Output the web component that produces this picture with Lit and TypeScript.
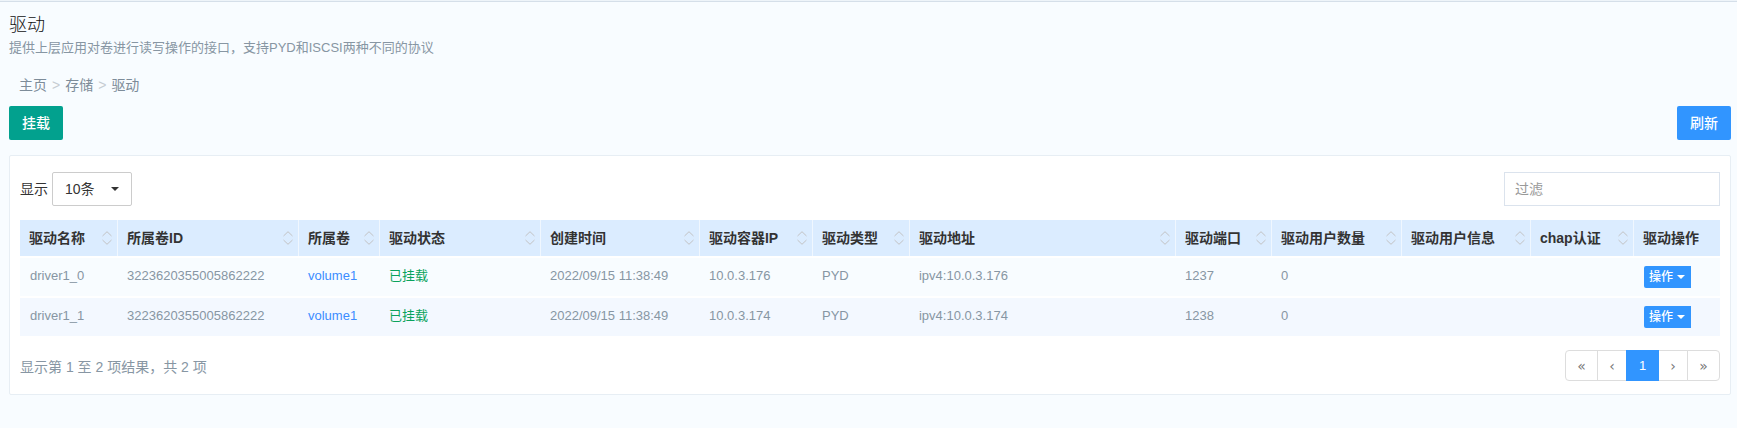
import { LitElement, html, css } from "lit";
import { customElement, state } from "lit/decorators.js";

interface Column {
  label: string;
  share: number;
  sortable: boolean;
}

interface Driver {
  name: string;
  volumeId: string;
  volume: string;
  status: string;
  created: string;
  ip: string;
  type: string;
  address: string;
  port: string;
  users: string;
}

const COLUMNS: Column[] = [
  { label: "驱动名称", share: 98, sortable: true },
  { label: "所属卷ID", share: 181, sortable: true },
  { label: "所属卷", share: 81, sortable: true },
  { label: "驱动状态", share: 161, sortable: true },
  { label: "创建时间", share: 159, sortable: true },
  { label: "驱动容器IP", share: 113, sortable: true },
  { label: "驱动类型", share: 97, sortable: true },
  { label: "驱动地址", share: 266, sortable: true },
  { label: "驱动端口", share: 96, sortable: true },
  { label: "驱动用户数量", share: 130, sortable: true },
  { label: "驱动用户信息", share: 129, sortable: true },
  { label: "chap认证", share: 103, sortable: true },
  { label: "驱动操作", share: 86, sortable: false },
];

const TOTAL = COLUMNS.reduce((sum, c) => sum + c.share, 0);

const DRIVERS: Driver[] = [
  {
    name: "driver1_0",
    volumeId: "3223620355005862222",
    volume: "volume1",
    status: "已挂载",
    created: "2022/09/15 11:38:49",
    ip: "10.0.3.176",
    type: "PYD",
    address: "ipv4:10.0.3.176",
    port: "1237",
    users: "0",
  },
  {
    name: "driver1_1",
    volumeId: "3223620355005862222",
    volume: "volume1",
    status: "已挂载",
    created: "2022/09/15 11:38:49",
    ip: "10.0.3.174",
    type: "PYD",
    address: "ipv4:10.0.3.174",
    port: "1238",
    users: "0",
  },
];

const caret = html`<svg class="caret" viewBox="0 0 8 4" width="8" height="4" aria-hidden="true">
  <path d="M0 0H8L4 4Z" fill="currentColor" />
</svg>`;

@customElement("driver-table")
export class DriverTable extends LitElement {
  static styles = css`
    :host {
      display: block;
    }
    table {
      width: 100%;
      table-layout: fixed;
      border-collapse: separate;
      border-spacing: 0;
    }
    th {
      height: 36px;
      padding: 0;
      background: #dbecff;
      border-right: 1px solid #f0f7ff;
      color: #333;
      font-size: 14px;
      line-height: 20px;
      font-weight: 700;
      text-align: left;
      white-space: nowrap;
    }
    th:last-child {
      border-right: 0;
    }
    .head {
      display: flex;
      align-items: center;
      justify-content: space-between;
      padding: 0 5px 0 9px;
    }
    .sort {
      display: flex;
      padding: 0;
      border: 0;
      background: none;
      cursor: pointer;
    }
    td {
      padding: 8px 9px;
      border-top: 2px solid #fff;
      background: #f8fcff;
      color: #8796a3;
      font-size: 13px;
      line-height: 20px;
      vertical-align: top;
      white-space: nowrap;
    }
    td:first-child,
    td:last-child {
      padding: 8px 10px;
    }
    tr:nth-child(even) td {
      background: #f3f8ff;
    }
    a {
      color: #3b8cff;
      text-decoration: none;
    }
    .ok {
      color: #0aa35c;
    }
    .action {
      display: flex;
      align-items: center;
      gap: 4px;
      height: 22px;
      padding: 0 6px 0 5px;
      border: 0;
      border-radius: 2px 0 0 2px;
      background: #3195ff;
      color: #fff;
      font-family: inherit;
      font-size: 12px;
      font-weight: 500;
      line-height: 18px;
      cursor: pointer;
    }
  `;

  render() {
    return html`<table>
      <colgroup>
        ${COLUMNS.map((c) => html`<col style="width:${(c.share / TOTAL) * 100}%" />`)}
      </colgroup>
      <thead>
        <tr>
          ${COLUMNS.map(
            (c) => html`<th scope="col">
              <div class="head">
                <span>${c.label}</span>
                ${c.sortable
                  ? html`<button class="sort" type="button" aria-label="${c.label}">
                      <svg viewBox="0 0 10 14" width="10" height="14" fill="none" stroke="#c2c2c4">
                        <path d="M0.5 5L5 0.7L9.5 5M0.5 9L5 13.3L9.5 9" />
                      </svg>
                    </button>`
                  : null}
              </div>
            </th>`
          )}
        </tr>
      </thead>
      <tbody>
        ${DRIVERS.map(
          (d) => html`<tr>
            <td>${d.name}</td>
            <td>${d.volumeId}</td>
            <td><a href="#">${d.volume}</a></td>
            <td class="ok">${d.status}</td>
            <td>${d.created}</td>
            <td>${d.ip}</td>
            <td>${d.type}</td>
            <td>${d.address}</td>
            <td>${d.port}</td>
            <td>${d.users}</td>
            <td></td>
            <td></td>
            <td><button class="action" type="button">操作${caret}</button></td>
          </tr>`
        )}
      </tbody>
    </table>`;
  }
}

@customElement("app-root")
export class AppRoot extends LitElement {
  @state() private page = 1;

  static styles = css`
    :host {
      display: block;
      box-sizing: border-box;
      min-height: 100vh;
      padding: 0 6px 0 9px;
      border-top: 1px solid #eef4f9;
      background: #f8fcff;
      color: #333;
      font-family: "Liberation Sans", "Noto Sans CJK SC", sans-serif;
      font-size: 14px;
      line-height: 20px;
    }
    .rule {
      height: 1px;
      margin: 0 -6px 0 -9px;
      background: #d5dfe9;
    }
    h1 {
      margin: 0;
      padding-top: 11px;
      color: #111;
      font-size: 18px;
      font-weight: 300;
      line-height: 24px;
    }
    .lead {
      margin: 0;
      color: #8796a3;
      font-size: 13px;
      line-height: 22px;
    }
    .crumbs {
      display: flex;
      gap: 5px;
      padding: 16px 0 0 10px;
    }
    .crumbs a {
      color: #7d8c99;
      text-decoration: none;
    }
    .crumbs span {
      color: #c6ccd2;
    }
    .bar {
      display: flex;
      align-items: center;
      justify-content: space-between;
    }
    .tools {
      padding: 11px 0 15px;
    }
    .btn {
      height: 34px;
      padding: 0 13px;
      border: 0;
      border-radius: 2px;
      background: #3195ff;
      color: #fff;
      font-family: inherit;
      font-size: 14px;
      font-weight: 500;
      line-height: 20px;
      cursor: pointer;
    }
    .btn.mount {
      background: #02a18e;
    }
    .panel {
      padding: 16px 10px 13px;
      border: 1px solid #e7eef4;
      border-radius: 2px;
      background: #fff;
    }
    .filters {
      padding-bottom: 14px;
    }
    .length {
      display: flex;
      align-items: center;
      gap: 4px;
    }
    .pick {
      position: relative;
      display: flex;
    }
    .pick .caret {
      position: absolute;
      top: 15px;
      right: 13px;
      pointer-events: none;
    }
    select {
      appearance: none;
      box-sizing: border-box;
      width: 80px;
      height: 34px;
      padding: 0 12px;
      border: 1px solid #ccc;
      border-radius: 2px;
      background: #fff;
      color: #333;
      font-family: inherit;
      font-size: 14px;
    }
    input {
      box-sizing: border-box;
      width: 216px;
      height: 34px;
      padding: 0 10px;
      border: 1px solid #dbe3ed;
      border-radius: 0;
      background: #fff;
      color: #333;
      font-family: inherit;
      font-size: 14px;
    }
    input::placeholder {
      color: #999;
    }
    .foot {
      padding-top: 14px;
    }
    .info {
      padding-top: 2px;
      color: #8796a3;
    }
    .pages {
      display: flex;
      height: 31px;
    }
    .pages button {
      box-sizing: border-box;
      width: 33px;
      margin-left: -1px;
      padding: 0;
      border: 1px solid #ddd;
      background: #fff;
      color: #777;
      font-family: "DejaVu Sans", sans-serif;
      font-size: 14px;
      line-height: 18px;
      cursor: pointer;
    }
    .pages .step {
      width: 30px;
    }
    .pages button:first-child {
      margin-left: 0;
      border-radius: 4px 0 0 4px;
    }
    .pages button:last-child {
      border-radius: 0 4px 4px 0;
    }
    .pages button.current {
      z-index: 1;
      border-color: #3195ff;
      background: #3195ff;
      color: #fff;
      font-family: inherit;
      font-size: 13px;
    }
  `;

  render() {
    return html`
      <div class="rule"></div>
      <header>
        <h1>驱动</h1>
        <p class="lead">提供上层应用对卷进行读写操作的接口，支持PYD和ISCSI两种不同的协议</p>
      </header>
      <nav class="crumbs">
        <a href="#">主页</a><span>&gt;</span><a href="#">存储</a><span>&gt;</span><a href="#">驱动</a>
      </nav>
      <div class="bar tools">
        <button class="btn mount" type="button">挂载</button>
        <button class="btn" type="button">刷新</button>
      </div>
      <main class="panel">
        <div class="bar filters">
          <div class="length">
            <label for="length">显示</label>
            <div class="pick">
              <select id="length">
                <option>10条</option>
              </select>
              ${caret}
            </div>
          </div>
          <input type="search" aria-label="过滤" placeholder="过滤" />
        </div>
        <driver-table></driver-table>
        <div class="bar foot">
          <span class="info">显示第 1 至 2 项结果，共 2 项</span>
          <nav class="pages">
            <button type="button">«</button>
            <button class="step" type="button">‹</button>
            <button class="current" type="button">${this.page}</button>
            <button class="step" type="button">›</button>
            <button type="button">»</button>
          </nav>
        </div>
      </main>
    `;
  }
}
